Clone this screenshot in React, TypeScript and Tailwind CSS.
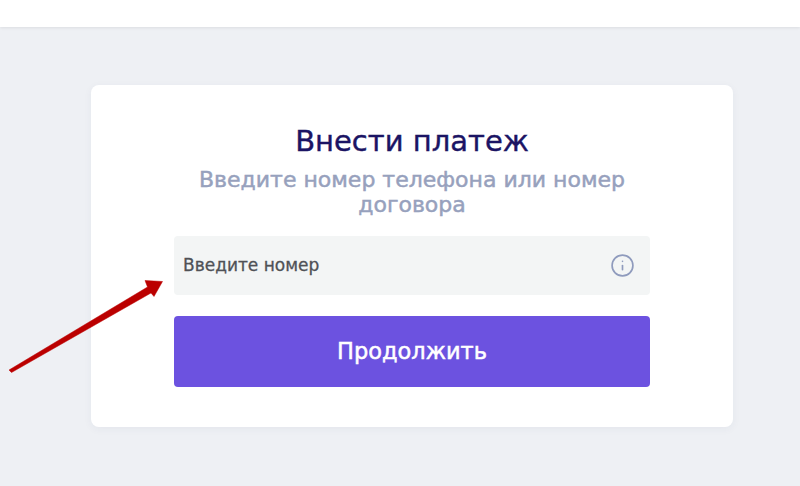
import { Info } from "lucide-react"

const font = "font-['DejaVu_Sans',sans-serif]"

export default function App() {
	return (
		<div className={`relative h-[486px] w-[800px] overflow-hidden bg-[#eef0f4] ${font}`}>
			<div className="h-[27px] bg-white shadow-[0_1px_3px_rgba(0,0,0,0.08)]" />
			<div className="ml-[91px] mt-[58px] flex h-[342px] w-[642px] flex-col items-center rounded-lg bg-white pt-[38px] shadow-[0_2px_8px_rgba(40,50,90,0.05)]">
				<h1 className="text-[29px] leading-[36px] text-[#1b1464] [-webkit-text-stroke:0.4px_#1b1464]">Внести платеж</h1>
				<p className="mt-[8px] w-[476px] text-center text-[22px] leading-[25px] text-[#97a1bd] [-webkit-text-stroke:0.5px_#97a1bd]">
					Введите номер телефона или номер договора
				</p>
				<div className="mt-[19px] flex h-[59px] w-[476px] items-center justify-between rounded bg-[#f3f5f5] pl-[9px] pr-[15px]">
					<span className="text-[17px] text-[#4f5156] [-webkit-text-stroke:0.3px_#4f5156]">Введите номер</span>
					<Info size={25} strokeWidth={1.6} className="text-[#8f9bbd]" />
				</div>
				<button className="mt-[21px] h-[71px] w-[476px] rounded bg-[#6c52e0] text-[22.5px] text-white [-webkit-text-stroke:0.5px_#ffffff]">
					Продолжить
				</button>
			</div>
			<svg className="absolute left-0 top-0" width="800" height="486" viewBox="0 0 800 486" fill="none">
				<path d="M11.500 372.500L9 370L147.500 287L145 280.500L162.500 281.500L154 296.500L151 293Z" fill="#bb0000" stroke="#bb0000" strokeWidth="0.5" strokeLinejoin="round" />
			</svg>
		</div>
	)
}
